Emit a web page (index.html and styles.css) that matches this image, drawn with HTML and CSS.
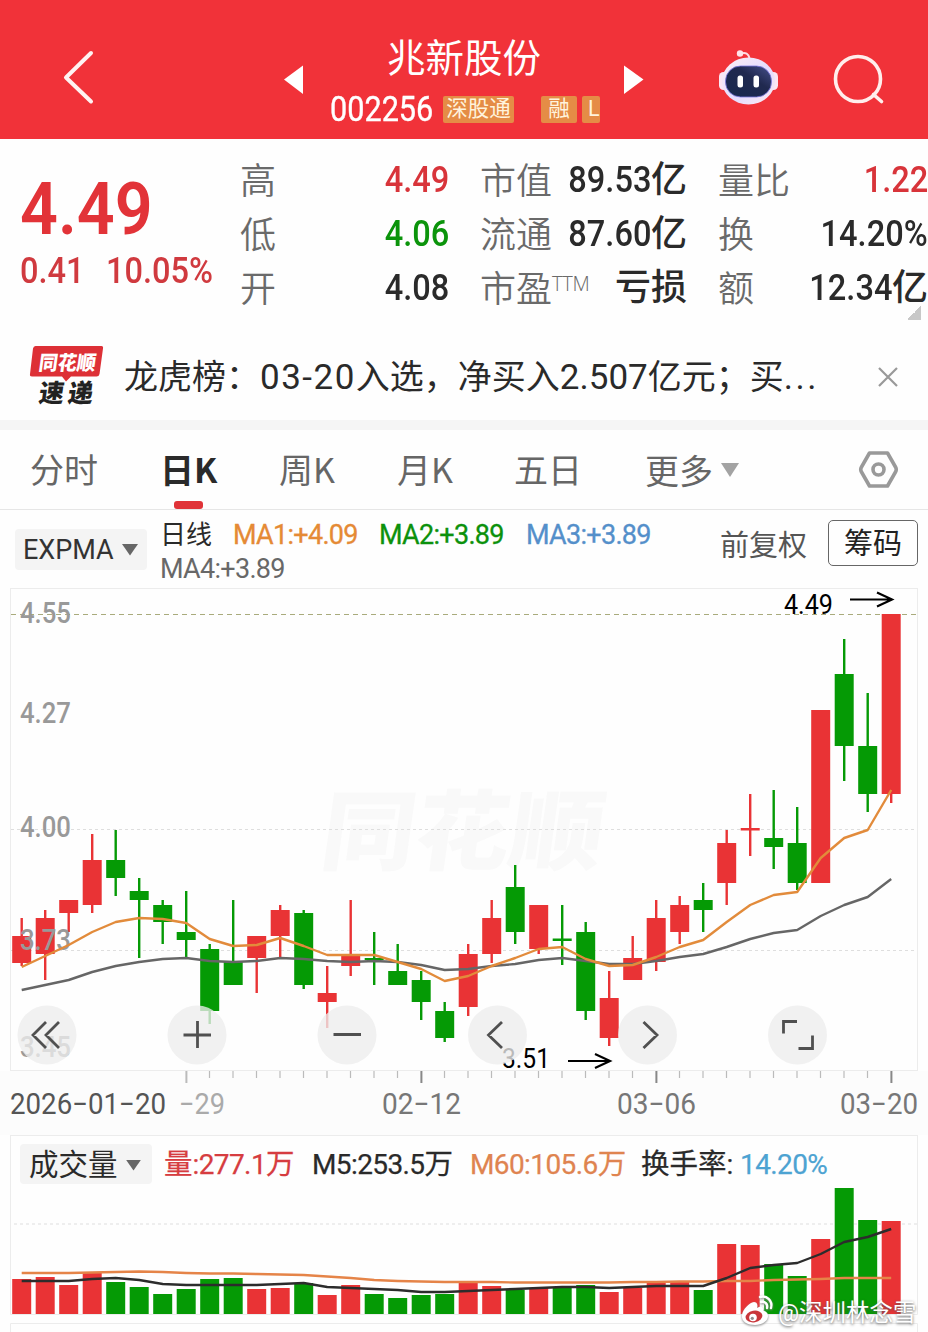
FILE: index.html
```html
<!DOCTYPE html>
<html lang="zh-CN">
<head>
<meta charset="utf-8">
<title>兆新股份 002256</title>
<link rel="stylesheet" href="styles.css">
</head>
<body>
<header class="topbar">
  <svg class="back" width="40" height="60" viewBox="58 48 40 60"><path d="M91 53 66 77.500 91 101.500"/></svg>
  <svg class="arrow" width="20" height="30" viewBox="284 65 20 30"><path d="M284 79.500 303 65.500V94Z"/></svg>
  <div class="stock">
    <div class="stock-name">兆新股份</div>
    <div class="stock-line"><span class="code"><b class="n">002256</b></span><span class="tag tag-hk">深股通</span><span class="tag tag-rong">融</span><span class="tag tag-l">L</span></div>
  </div>
  <svg class="arrow next" width="20" height="30" viewBox="624 65 20 30"><path d="M643.500 79.500 624 65.500V94Z"/></svg>
  <svg class="robot" width="62" height="58" viewBox="717 49 62 58">
    <defs>
      <linearGradient id="shell" x1="0" y1="0" x2="1" y2="1"><stop offset="0" stop-color="#ffeff4"/><stop offset=".55" stop-color="#e3dcff"/><stop offset="1" stop-color="#ffe9f0"/></linearGradient>
      <linearGradient id="visor" x1="0" y1="1" x2="1" y2="0"><stop offset="0" stop-color="#17284f"/><stop offset=".6" stop-color="#20294f"/><stop offset="1" stop-color="#46508c"/></linearGradient>
    </defs>
    <path d="M741 53.500Q748 51.500 749.500 58" fill="none" stroke="#ffdce2" stroke-width="2"/>
    <circle cx="740" cy="53.500" r="3.200" fill="#ffe3e8"/>
    <rect x="719" y="72" width="9" height="18" rx="4.500" fill="#fbe6f3"/><rect x="769" y="72" width="9" height="18" rx="4.500" fill="#fbe6f3"/>
    <ellipse cx="748.500" cy="81" rx="26.500" ry="23.500" fill="url(#shell)"/>
    <rect x="725.500" y="66" width="46" height="31" rx="15" fill="url(#visor)" stroke="#7b78df" stroke-width=".8"/>
    <rect x="737.500" y="75.500" width="5.500" height="12" rx="2.500" fill="#fff"/><rect x="753.500" y="75.500" width="5.500" height="12" rx="2.500" fill="#fff"/>
  </svg>
  <svg class="search" width="56" height="56" viewBox="831 51 56 56"><circle cx="858" cy="79" r="22.500"/><path d="M873.500 94.500 881.500 101.500"/></svg>
</header>

<section class="quote">
  <div class="price-box">
    <div class="price"><b class="n">4.49</b></div>
    <div class="change"><span><b class="n">0.41</b></span><span><b class="n">10.05%</b></span></div>
  </div>
  <dl class="stats">
    <dt>高</dt><dd class="up"><b class="n">4.49</b></dd><dt>市值</dt><dd><b class="n">89.53</b><i>亿</i></dd><dt>量比</dt><dd class="up"><b class="n">1.22</b></dd>
    <dt>低</dt><dd class="down"><b class="n">4.06</b></dd><dt>流通</dt><dd><b class="n">87.60</b><i>亿</i></dd><dt>换</dt><dd><b class="n">14.20%</b></dd>
    <dt>开</dt><dd><b class="n">4.08</b></dd><dt>市盈<sup>TTM</sup></dt><dd><i>亏损</i></dd><dt>额</dt><dd><b class="n">12.34</b><i>亿</i></dd>
  </dl>
  <span class="corner"></span>
</section>

<section class="news">
  <svg class="news-logo" width="80" height="66" viewBox="26 342 80 66">
    <path d="M35.500 346H101.500Q103.500 346 103 348.500L99.500 374Q99 376.500 96.500 376.500H71L66 381.500 62 376.500H32Q29.500 376.500 30 374L33 348.500Q33.500 346 35.500 346Z" fill="#dd3036"/>
    <g transform="translate(38 369.500) skewX(-8)"><text class="logo-a" textLength="57" lengthAdjust="spacingAndGlyphs">同花顺</text></g>
    <g transform="translate(38 402) skewX(-8)"><text class="logo-b">速</text><text class="logo-b" x="29">递</text></g>
  </svg>
  <div class="headline">龙虎榜：<b class="date">03-20</b>入选，净买入<b>2.507</b>亿元；买<b class="dots">...</b></div>
  <svg class="close" width="24" height="24" viewBox="0 0 24 24"><path d="M3 3 21 21M21 3 3 21"/></svg>
</section>

<nav class="tabs">
  <span>分时</span><span class="active">日K</span><span>周K</span><span>月K</span><span>五日</span><span class="more">更多<svg width="20" height="16" viewBox="0 0 20 16"><path d="M1 1H19L10 15Z" fill="#a3a3a3"/></svg></span>
  <svg class="hex" width="42" height="42" viewBox="858 448 42 42"><path d="M869.500 453H887.500L895.500 467Q897 469.500 895.500 472L887.500 486H869.500L861.500 472Q860 469.500 861.500 467Z"/><circle cx="878.500" cy="469.500" r="5.500"/></svg>
</nav>

<section class="indicator">
  <div class="picker">EXPMA<svg width="16" height="12" viewBox="0 0 16 12"><path d="M0 0H16L8 11.500Z" fill="#666"/></svg></div>
  <div class="legend">
    <span class="cn">日线</span><span class="ma1">MA1:+4.09</span><span class="ma2">MA2:+3.89</span><span class="ma3">MA3:+3.89</span>
    <span class="ma4">MA4:+3.89</span>
  </div>
  <span class="adjust">前复权</span>
  <span class="chips">筹码</span>
</section>

<svg class="kline" id="kline" width="928" height="547" viewBox="0 588 928 547">
  <rect x="0" y="1071" width="928" height="64" fill="#fcfcfc"/>
  <rect x="10.500" y="588.500" width="907" height="482" class="frame"/>
  <g transform="translate(318 863) skewX(-8)"><text class="ghost" textLength="282" lengthAdjust="spacingAndGlyphs">同花顺</text></g>
  <path class="grid" d="M11 829.500H917M11 950.500H917"/>
  <path class="limit" d="M11 614.500H917"/>
  <g id="candles"></g>
  <g class="scale">
    <text x="20" y="623" textLength="51" lengthAdjust="spacingAndGlyphs">4.55</text>
    <text x="20" y="723" textLength="51" lengthAdjust="spacingAndGlyphs">4.27</text>
    <text x="20" y="837" textLength="51" lengthAdjust="spacingAndGlyphs">4.00</text>
    <text x="20" y="950" textLength="51" lengthAdjust="spacingAndGlyphs">3.73</text>
    <text x="20" y="1057" textLength="51" lengthAdjust="spacingAndGlyphs">3.45</text>
  </g>
  <g id="averages"></g>
  <g class="mark">
    <text x="784" y="614" textLength="49" lengthAdjust="spacingAndGlyphs">4.49</text>
    <path d="M850 599.500H891M877 592.500 892 599.500 877 606.500"/>
    <text x="502" y="1067.500" textLength="48" lengthAdjust="spacingAndGlyphs">3.51</text>
    <path d="M568 1061H609M595 1054 610 1061 595 1068"/>
  </g>
  <g class="buttons">
    <circle cx="47" cy="1035" r="29.500"/><circle cx="197" cy="1035" r="29.500"/><circle cx="347" cy="1035" r="29.500"/><circle cx="497.500" cy="1035" r="29.500"/><circle cx="647.500" cy="1035" r="29.500"/><circle cx="797.500" cy="1035" r="29.500"/>
    <path d="M46 1022 33 1035 46 1048M59 1022 46 1035 59 1048M183.500 1035H211M197.500 1021V1048M333.500 1034.500H361M502 1022 488.500 1035 502 1048M643.500 1022 657 1035 643.500 1048M783.500 1033.500V1021.500H797M812.500 1035.500V1048.500H798.500"/>
  </g>
  <g id="ticks"></g>
  <g class="dates">
    <text x="10" y="1113.500" class="strong" textLength="156" lengthAdjust="spacingAndGlyphs">2026−01−20</text>
    <text x="179" y="1113.500" class="faint" textLength="46" lengthAdjust="spacingAndGlyphs">−29</text>
    <text x="382" y="1113.500" textLength="79" lengthAdjust="spacingAndGlyphs">02−12</text>
    <text x="617" y="1113.500" textLength="79" lengthAdjust="spacingAndGlyphs">03−06</text>
    <text x="840" y="1113.500" textLength="78" lengthAdjust="spacingAndGlyphs">03−20</text>
  </g>
</svg>

<section class="volume">
  <div class="volume-head">
    <div class="picker vol-picker">成交量<svg width="15" height="11" viewBox="0 0 16 12"><path d="M0 0H16L8 11.500Z" fill="#666"/></svg></div>
    <span class="v-red"><i>量</i>:277.1<i>万</i></span>
    <span class="v-m5">M5:253.5<i>万</i></span>
    <span class="v-m60">M60:105.6<i>万</i></span>
    <span class="v-turn"><i>换手率</i>:</span>
    <span class="v-blue">14.20%</span>
  </div>
  <svg class="vol-chart" width="928" height="146" viewBox="0 1186 928 146">
    <path d="M10.500 1186V1314.500H917.500V1186M10.500 1332V1323.500H917.500V1332" class="frame"/>
    <path class="grid" d="M14 1224H917"/>
    <g id="volumes"></g>
  </svg>
  <div class="credit">
    <svg width="34" height="34" viewBox="0 0 34 34">
      <path d="M14 8C9 9 3 15 2 21C1 28 8 31 15 31C22 31 28 27 28 22C28 19 26 17 23 17C24 14 22 11 17 14C18 11 17 8 14 8Z" fill="#fff"/>
      <ellipse cx="14" cy="22.500" rx="8.500" ry="5.800" transform="rotate(-10 14 22.500)" fill="#c9363a"/>
      <circle cx="13" cy="23.500" r="3.800" fill="#fff"/><circle cx="12.300" cy="24.300" r="1.600" fill="#8d8d8d"/>
      <path d="M20 3C27 1 33 7 31 14M21 8C25 7 28 10 27 14" fill="none" stroke="#fff" stroke-width="2.400" stroke-linecap="round"/>
    </svg>
    <span>@深圳林念雪</span>
  </div>
</section>
<script src="chart.js"></script>
</body>
</html>
```

FILE: styles.css
```css
* { box-sizing: border-box; }
body {
  margin: 0;
  width: 928px;
  height: 1332px;
  overflow: hidden;
  background: #fefefe;
  color: #2a2a2a;
  font-family: Roboto, "Noto Sans CJK SC", sans-serif;
}
i, b { font-style: normal; font-weight: inherit; }
svg { display: block; flex: none; }

/* Condensed figures */
.n { display: inline-block; transform: scaleX(.88); transform-origin: left center; }

/* Top bar */
.topbar {
  display: flex;
  align-items: flex-start;
  height: 139px;
  background: #f13239;
  color: #fff;
}
.back { margin: 48px 0 0 58px; }
.back path { fill: none; stroke: #fff3f2; stroke-width: 4; stroke-linecap: round; stroke-linejoin: round; }
.arrow { margin: 65px 0 0 186px; fill: #fff; }
.arrow.next { margin-left: 24px; }
.stock { width: 270px; margin: 31px 0 0 26px; }
.stock-name { height: 48px; line-height: 48px; font-size: 38.5px; font-family: "Noto Sans CJK SC", sans-serif; padding-left: 57px; white-space: nowrap; }
.stock-line { display: flex; align-items: center; height: 55px; padding-top: 5px; }
.code { width: 113px; font-size: 35px; }
.code .n { transform: scaleX(.875); -webkit-text-stroke: .4px #fff; }
.tag { height: 27px; line-height: 26px; background: #e58c46; color: #fff3dc; font-size: 21.500px; border-radius: 2px; text-align: center; }
.tag-hk { width: 71px; }
.tag-rong { width: 36px; margin-left: 27px; }
.tag-l { width: 18px; margin-left: 5px; padding-left: 6px; text-align: left; overflow: hidden; }
.robot { margin: 49px 0 0 73px; }
.search { margin: 51px 0 0 52px; }
.search circle, .search path { fill: none; stroke: #ffeeec; stroke-width: 3.600; stroke-linecap: round; }

/* Quote */
.quote { display: flex; height: 196px; position: relative; }
.price-box { width: 240px; padding: 25px 0 0 20px; color: #e23338; }
.price { height: 89px; line-height: 90px; font-size: 73px; font-weight: 600; }
.price .n { transform: scaleX(.91); }
.change { display: flex; height: 36px; line-height: 36px; font-size: 37px; font-weight: 500; color: #d03a3f; }
.change span:first-child { width: 86px; }
.stats {
  display: grid;
  grid-template-columns: 110px 99px 112px 126px 112px 129px;
  grid-template-rows: repeat(3, 54px);
  margin: 14px 0 0;
  line-height: 54px;
}
.stats dt { font-size: 36px; line-height: 50px; color: #6a6a6a; white-space: nowrap; font-family: "Noto Sans CJK SC", sans-serif; font-weight: 350; }
.stats dt:nth-of-type(3n+2), .stats dt:nth-of-type(3n) { margin-left: 31px; }
.stats dd { margin: 0; text-align: right; font-size: 37px; font-weight: 500; white-space: nowrap; display: flex; justify-content: flex-end; }
.stats dd .n { transform-origin: right center; }
.stats dd i { font-size: 36px; }
.stats sup { font-size: 20px; line-height: 0; vertical-align: 11px; font-family: "Open Sans", sans-serif; font-weight: 300; letter-spacing: -.2px; }
.stats .up { color: #d8343a; }
.stats .down { color: #0b940b; }
.corner { position: absolute; left: 907px; top: 167px; width: 14px; height: 14px; background: linear-gradient(135deg, transparent 50%, #c8c8c8 50%); }

/* News */
.news { display: flex; align-items: center; height: 95px; padding-bottom: 2px; border-bottom: 10px solid #f5f5f5; }
.news-logo { margin: -3px 0 0 26px; }
.logo-a { font: 900 20px "Noto Sans CJK SC", sans-serif; fill: #fff; }
.logo-b { font: 900 25px "Noto Sans CJK SC", sans-serif; fill: #222; }
.headline { width: 752px; padding-left: 18px; font-size: 34px; line-height: 60px; white-space: nowrap; font-family: "Noto Sans CJK SC", sans-serif; }
.headline b { font-family: Roboto, sans-serif; font-size: 35px; }
.headline .date { letter-spacing: 1.500px; }
.headline .dots { letter-spacing: 2.500px; }
.close { margin-left: 18px; }
.close path { stroke: #999; stroke-width: 2.200; fill: none; }

/* Tabs */
.tabs {
  display: grid;
  grid-template-columns: 130px 119px 118px 117px 131px 213px 42px;
  align-items: center;
  height: 80px;
  padding-left: 30px;
  border-bottom: 1px solid #e6e6e6;
  font-family: "Noto Sans CJK SC", sans-serif;
  font-size: 34px;
  color: #666;
}
.tabs span { height: 79px; line-height: 77px; }
.tabs .active { position: relative; font-weight: 700; color: #2a2a2a; }
.active::after { content: ""; position: absolute; left: 14px; bottom: 0; width: 29px; height: 8px; border-radius: 3px; background: #e03338; }
.more { display: flex; align-items: center; gap: 7px; }
.hex { margin-top: -1px; }
.hex path, .hex circle { fill: none; stroke: #999; stroke-width: 3.600; stroke-linejoin: round; }

/* Indicator */
.indicator { display: flex; height: 78px; padding-left: 15px; }
.picker { display: flex; align-items: center; background: #f4f4f4; border-radius: 4px; }
.indicator .picker { width: 132px; height: 41px; margin-top: 19px; padding-left: 8px; gap: 8px; font-size: 27px; color: #333; }
.legend { display: grid; grid-template-columns: 73px 146px 147px 150px; grid-template-rows: 34px 34px; width: 559px; padding: 8px 0 0 13px; line-height: 34px; font-size: 27px; letter-spacing: -.7px; white-space: nowrap; }
.legend .cn { font-size: 26px; letter-spacing: 0; }
.ma1 { color: #e58a35; -webkit-text-stroke: .3px; }
.ma2 { color: #0c910c; -webkit-text-stroke: .3px; }
.ma3 { color: #548fca; -webkit-text-stroke: .3px; }
.ma4 { grid-column: 1 / 3; color: #686868; }
.adjust { width: 122px; padding-left: 14px; line-height: 72px; font-size: 29px; color: #555; white-space: nowrap; }
.chips { width: 90px; height: 46px; margin-top: 10px; border: 1.500px solid #666; border-radius: 5px; text-align: center; font-size: 29px; line-height: 47px; color: #222; }

/* Charts */
.frame { fill: none; stroke: #ececec; }
.grid { fill: none; stroke: #dedede; stroke-dasharray: 3 3; }
.limit { stroke: #a9ab7c; stroke-dasharray: 5 4; }
.ghost { font: 900 87px "Noto Sans CJK SC", sans-serif; fill: #f9f9f9; }
.scale text { font: 500 29px Roboto, sans-serif; fill: #999; }
.mark text { font: 400 27px Roboto, sans-serif; fill: #000; }
.mark path { fill: none; stroke: #000; stroke-width: 2.200; }
.buttons circle { fill: #ededed; fill-opacity: .78; }
.buttons path { fill: none; stroke: #505050; stroke-width: 2.800; }
.dates text { font: 400 29px Roboto, sans-serif; fill: #777; }
.dates .strong { fill: #555; }
.dates .faint { fill: #aaa; }
.red { fill: #e93335; stroke: none; }
.green { fill: #059a05; stroke: none; }
.line { fill: none; stroke-width: 2.400; stroke-linejoin: round; }

.volume { position: relative; height: 197px; }
.volume-head { display: grid; grid-template-columns: 144px 148px 158px 171px 99px 120px; align-items: center; width: 908px; height: 51px; margin-left: 10px; padding: 6px 0 0 9px; border: 1px solid #ececec; border-bottom: 0; font-size: 28px; letter-spacing: -.6px; line-height: 40px; white-space: nowrap; }
.volume-head span { padding-top: 2px; -webkit-text-stroke: .25px; }
.volume-head i { font-size: 28.500px; letter-spacing: 0; }
.vol-picker { width: 132px; height: 40px; padding: 2px 0 0 9px; gap: 8px; font-size: 29.500px; letter-spacing: 0; }
.v-red { color: #d63c40; }
.v-m60 { color: #df8450; }
.v-blue { color: #4da3d2; }
.credit { position: absolute; left: 740px; top: 159px; display: flex; align-items: center; height: 34px; color: #fff; font-size: 23.500px; white-space: nowrap; gap: 4px; text-shadow: 0 1px 3px #555; }
.credit svg { filter: drop-shadow(0 1px 1px #888); }
```

FILE: chart.js
```js
// colour, high, body top, body bottom, low, volume top (y coordinates)
const days = [
  ['r',918,936,963,966,1279],['r',910,918,954,980,1277],['r',900,900,913,932,1285],['r',834,860,905,913,1273],
  ['g',830,860,878,896,1282],['g',878,891,900,958,1287],['g',900,905,922,944,1294],['g',891,932,940,957,1289],
  ['g',944,949,1011,1024,1279],['g',900,962,985,985,1278],['r',936,936,958,993,1289],['r',905,910,936,957,1288],
  ['g',910,913,985,989,1283],['r',966,993,1002,1028,1295],['r',900,956,966,976,1285],['g',932,958,960,985,1294],
  ['g',944,971,985,985,1298],['g',971,980,1002,1020,1295],['g',1002,1011,1038,1042,1294],['r',944,954,1007,1016,1283],
  ['r',900,918,954,963,1286],['g',865,887,932,944,1290],['r',905,905,949,954,1288],['g',905,938.5,941,965,1287],
  ['g',922,932,1011,1020,1285],['r',971,998,1038,1046,1292],['r',936,958,980,980,1288],['r',900,918,962,971,1283],
  ['r',896,905,932,944,1282],['g',883,900,910,932,1290],['r',830,843,883,905,1244],['r',794,828,830.5,856,1245],
  ['g',790,838,847,869,1264],['g',807,843,883,890,1276],['r',710,710,883,883,1239],['g',639,674,746,781,1188],
  ['g',693,746,794,812,1220],['r',614,614,794,803,1221]
];
const ma1 = [967,956,945,932,922,918,919,923,939,946,945,938,946,955,955,955,962,969,981,976,966,958,949,947,959,966,965,957,947,940,922,905,895,892,858,838,830,790];
const ma4 = [990,985,980,972,966,962,959,958,961,962,961,958,959,961,962,961,962,965,970,969,966,964,960,958,961,964,964,961,957,954,947,939,933,930,916,905,897,879];
const m5 = [1281,1281,1281,1279,1278,1280,1284,1285,1285,1285,1285,1284,1283,1287,1288,1289,1290,1292,1292,1291,1290,1289,1288,1287,1287,1288,1287,1286,1286,1286,1278,1268,1265,1263,1254,1242,1237,1229];
const m60 = [1273,1273,1273,1272.5,1272,1271.5,1272,1273,1273.5,1273.5,1274,1274.5,1275,1276.5,1278,1280,1281,1281.5,1282,1282,1282,1282.5,1282.5,1282.5,1282.5,1282.5,1282,1282,1281.5,1281.5,1281,1281,1280,1279.5,1279,1278,1278,1278];

const x = i => 21.7 + i * 23.5;
const line = (values, color) =>
  `<polyline class="line" stroke="${color}" points="${values.map((y, i) => `${x(i)},${y}`).join(' ')}"/>`;
const cls = c => c === 'r' ? 'red' : 'green';

document.getElementById('candles').innerHTML = days.map(([c, high, top, bottom, low], i) =>
  `<g class="${cls(c)}"><rect x="${x(i) - 1.2}" y="${high}" width="2.4" height="${low - high}"/>` +
  `<rect x="${x(i) - 9.5}" y="${top}" width="19" height="${bottom - top}"/></g>`).join('');
document.getElementById('averages').innerHTML = line(ma4, '#666') + line(ma1, '#e28b3b');
document.getElementById('ticks').innerHTML = days.slice(7).map((d, i) => {
  const major = i % 10 === 0;
  return `<rect x="${x(i + 7) - 0.8}" y="1071" width="${major ? 2 : 1.2}" height="${major ? 12 : 7}" fill="${!major || i === 0 ? '#bbb' : '#888'}"/>`;
}).join('');
document.getElementById('volumes').innerHTML = days.map((d, i) =>
  `<rect class="${cls(d[0])}" x="${x(i) - 9.5}" y="${d[5]}" width="19" height="${1314 - d[5]}"/>`).join('') +
  line(m60, '#e58448') + line(m5, '#2c2c2c');
```
